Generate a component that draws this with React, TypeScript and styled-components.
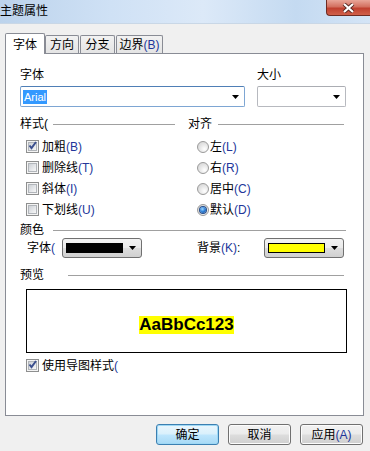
import styled, { createGlobalStyle } from "styled-components";

const GlobalStyle = createGlobalStyle`
  html, body { margin: 0; padding: 0; }
  body {
    background: #f0f0f0;
    font-family: "Liberation Sans", "Noto Sans CJK SC", sans-serif;
    font-size: 12px;
    color: #000;
  }
`;

const Window = styled.div`
  width: 370px;
  height: 451px;
  display: flex;
  flex-direction: column;
  background: #f0f0f0;
  overflow: hidden;
`;

const TitleBar = styled.div`
  height: 24px;
  flex: none;
  box-sizing: border-box;
  display: flex;
  justify-content: space-between;
  align-items: flex-start;
  background: linear-gradient(90deg, #bcd3ec 0%, #cfe1f5 30%, #dce9f8 55%, #c4daf1 80%, #d4e4f6 100%);
  border-bottom: 1px solid #c9d7e6;
`;

const Title = styled.div`
  line-height: 14px;
  margin-top: 4px;
`;

const CloseButton = styled.div`
  width: 44px;
  height: 16px;
  box-sizing: border-box;
  border: 1px solid #6e2b22;
  border-top: none;
  border-right: none;
  border-radius: 0 0 0 4px;
  background: linear-gradient(#e9a699 0%, #d3705f 45%, #c0402f 55%, #d0604a 100%);
  display: flex;
  align-items: center;
  justify-content: center;
`;

const Body = styled.div`
  flex: 1;
  display: flex;
  flex-direction: column;
  padding: 9px 6px 0 5px;
`;

const TabRow = styled.div`
  height: 21px;
  display: flex;
  align-items: flex-end;
  position: relative;
  z-index: 1;
`;

const Tab = styled.div<{ $active?: boolean; $width: number; $gap?: number }>`
  width: ${(p) => p.$width}px;
  height: ${(p) => (p.$active ? 21 : 18)}px;
  margin-bottom: ${(p) => (p.$active ? 0 : 1)}px;
  margin-left: ${(p) => p.$gap ?? 0}px;
  box-sizing: border-box;
  border: 1px solid #898c95;
  border-bottom: none;
  border-radius: 2px 2px 0 0;
  background: ${(p) => (p.$active ? "#fff" : "linear-gradient(#f2f2f2, #e4e4e4)")};
  display: flex;
  align-items: center;
  justify-content: center;
  line-height: 14px;
  padding-top: ${(p) => (p.$active ? 1 : 0)}px;
`;

const Panel = styled.div`
  margin-top: -1px;
  width: 359px;
  height: 363px;
  box-sizing: border-box;
  border: 1px solid #898c95;
  background: #fff;
  padding: 14px 0 0 14px;
  display: flex;
  flex-direction: column;
`;

const Mn = styled.span`
  color: #22369a;
`;

const FieldRow = styled.div`
  display: flex;
  gap: 12px;
`;

const Field = styled.div<{ $width: number }>`
  width: ${(p) => p.$width}px;
  display: flex;
  flex-direction: column;
  gap: 4px;
`;

const Label = styled.div`
  line-height: 14px;
  height: 14px;
`;

const Combo = styled.div<{ $focused?: boolean }>`
  height: 21px;
  box-sizing: border-box;
  border: 1px solid ${(p) => (p.$focused ? "#7ea6d3" : "#b7b9bf")};
  border-top-color: ${(p) => (p.$focused ? "#4f7fb6" : "#abadb3")};
  border-radius: 2px;
  background: #fff;
  display: flex;
  align-items: center;
  padding: 0 5px 0 2px;
`;

const Selected = styled.span`
  background: #3399ff;
  color: #fff;
  font-size: 11px;
  line-height: 14px;
  padding: 0 1px;
`;

const Arrow = styled.svg`
  margin-left: auto;
  flex: none;
`;

const Columns = styled.div<{ $top: number }>`
  display: grid;
  grid-template-columns: 155px 157px;
  column-gap: 13px;
  margin-top: ${(p) => p.$top}px;
`;

const Group = styled.div`
  display: flex;
  flex-direction: column;
`;

const Header = styled.div<{ $labelWidth: number; $top?: number; $end?: number }>`
  display: flex;
  align-items: center;
  height: 14px;
  line-height: 14px;
  margin-top: ${(p) => p.$top ?? 0}px;
  margin-right: ${(p) => p.$end ?? 0}px;

  span {
    width: ${(p) => p.$labelWidth}px;
    flex: none;
  }

  &::after {
    content: "";
    flex: 1;
    height: 1px;
    background: #a0a0a0;
  }
`;

const Options = styled.div`
  margin-top: 5px;
  display: flex;
  flex-direction: column;
`;

const Option = styled.div<{ $indent: number; $gap: number; $top?: number }>`
  height: 21px;
  display: flex;
  align-items: center;
  padding-left: ${(p) => p.$indent}px;
  margin-top: ${(p) => p.$top ?? 0}px;
  gap: ${(p) => p.$gap}px;
  line-height: 14px;
`;

const OptionText = styled.span`
  white-space: nowrap;
`;

const CheckBox = styled.span`
  width: 13px;
  height: 13px;
  flex: none;
  box-sizing: border-box;
  border: 1px solid #8e8f8f;
  background: #f4f4f4;
  padding: 1px;
  display: flex;

  & > i {
    flex: 1;
    border: 1px solid #b1b5ba;
    background: linear-gradient(135deg, #cdd1d6 0%, #e4e6e9 55%, #f7f7f7 100%);
    position: relative;
  }

  svg {
    position: absolute;
    left: -2px;
    top: -3px;
  }
`;

const Radio = styled.span<{ $on?: boolean }>`
  width: 12px;
  height: 12px;
  flex: none;
  box-sizing: border-box;
  border-radius: 50%;
  border: 1px solid #9a9a9a;
  background: radial-gradient(circle at 65% 70%, #ffffff 0%, #e8e8e8 45%, #cfcfcf 100%);
  display: flex;
  align-items: center;
  justify-content: center;

  &::after {
    content: "";
    display: ${(p) => (p.$on ? "block" : "none")};
    width: 6px;
    height: 6px;
    border-radius: 50%;
    background: radial-gradient(circle at 40% 35%, #9fd6ff 0%, #2c7fd6 50%, #153e86 100%);
    box-shadow: 0 0 0 1px #264d8a;
  }
`;

const ColorRow = styled.div`
  display: grid;
  grid-template-columns: 155px 157px;
  column-gap: 13px;
  margin-top: 1px;
  height: 20px;
`;

const ColorCell = styled.div<{ $indent: number }>`
  display: flex;
  align-items: center;
  padding-left: ${(p) => p.$indent}px;
  line-height: 14px;
`;

const ColorCombo = styled.div<{ $start?: number }>`
  width: 80px;
  height: 20px;
  box-sizing: border-box;
  margin-left: ${(p) => (p.$start !== undefined ? `${p.$start}px` : "auto")};
  margin-right: 1px;
  border: 1px solid #707070;
  border-radius: 3px;
  background: linear-gradient(#f3f3f3 0%, #ebebeb 48%, #dddddd 52%, #d0d0d0 100%);
  display: flex;
  align-items: center;
  padding: 0 5px 0 3px;
`;

const Swatch = styled.span<{ $color: string }>`
  width: 57px;
  height: 10px;
  box-sizing: border-box;
  border: 1px solid #000;
  background: ${(p) => p.$color};
`;

const Preview = styled.div`
  margin: 7px 0 0 6px;
  width: 321px;
  height: 64px;
  box-sizing: border-box;
  border: 1px solid #000;
  display: flex;
  align-items: center;
  justify-content: center;
  padding-top: 7px;
`;

const Sample = styled.span`
  background: #ffff00;
  font-family: "Liberation Sans", Arial, sans-serif;
  font-weight: bold;
  font-size: 17px;
  line-height: 18px;
`;

const Buttons = styled.div`
  display: flex;
  justify-content: flex-end;
  gap: 9px;
  margin-top: 8px;
  padding-right: 1px;
`;

const DlgButton = styled.button<{ $default?: boolean }>`
  width: 63px;
  height: 21px;
  box-sizing: border-box;
  padding: 0;
  font: inherit;
  line-height: 14px;
  color: #000;
  border-radius: 3px;
  border: 1px solid ${(p) => (p.$default ? "#3c7fb1" : "#707070")};
  background: ${(p) =>
    p.$default
      ? "linear-gradient(#eaf6fd 0%, #d9f0fc 48%, #bee6fd 52%, #a7d9f5 100%)"
      : "linear-gradient(#f2f2f2 0%, #ebebeb 48%, #dddddd 52%, #cfcfcf 100%)"};
  box-shadow: inset 0 0 0 1px ${(p) => (p.$default ? "#9ed8f5" : "#fcfcfc")};
`;

function DownArrow() {
  return (
    <Arrow width="7" height="4" viewBox="0 0 7 4">
      <polygon points="0,0 7,0 3.5,4" fill="#000" />
    </Arrow>
  );
}

function Check({ checked }: { checked?: boolean }) {
  return (
    <CheckBox>
      <i>
        {checked && (
          <svg width="11" height="11" viewBox="0 0 11 11">
            <path d="M2.5 5.5 L4.5 8 L9 2" fill="none" stroke="#3b4f8e" strokeWidth="2" />
          </svg>
        )}
      </i>
    </CheckBox>
  );
}

const styles = [
  { text: "加粗", key: "B", checked: true },
  { text: "删除线", key: "T" },
  { text: "斜体", key: "I" },
  { text: "下划线", key: "U" },
];

const aligns = [
  { text: "左", key: "L" },
  { text: "右", key: "R" },
  { text: "居中", key: "C" },
  { text: "默认", key: "D", on: true },
];

export default function App() {
  return (
    <>
      <GlobalStyle />
      <Window>
        <TitleBar>
          <Title>主题属性</Title>
          <CloseButton>
            <svg width="13" height="10" viewBox="0 0 13 10">
              <path d="M2 1 L11 9 M11 1 L2 9" stroke="#5a2a24" strokeWidth="4" />
              <path d="M2 1 L11 9 M11 1 L2 9" stroke="#fff" strokeWidth="2.2" />
            </svg>
          </CloseButton>
        </TitleBar>
        <Body>
          <TabRow>
            <Tab $active $width={40}>字体</Tab>
            <Tab $width={34}>方向</Tab>
            <Tab $width={35} $gap={1}>分支</Tab>
            <Tab $width={47} $gap={1}>
              边界<Mn>(B)</Mn>
            </Tab>
          </TabRow>
          <Panel>
            <FieldRow>
              <Field $width={225}>
                <Label>字体</Label>
                <Combo $focused>
                  <Selected>Arial</Selected>
                  <DownArrow />
                </Combo>
              </Field>
              <Field $width={89}>
                <Label>大小</Label>
                <Combo>
                  <DownArrow />
                </Combo>
              </Field>
            </FieldRow>

            <Columns $top={10}>
              <Group>
                <Header $labelWidth={33}>
                  <span>样式(</span>
                </Header>
                <Options>
                  {styles.map((s) => (
                    <Option key={s.key} $indent={6} $gap={3}>
                      <Check checked={s.checked} />
                      <OptionText>
                        {s.text}
                        <Mn>({s.key})</Mn>
                      </OptionText>
                    </Option>
                  ))}
                </Options>
              </Group>
              <Group>
                <Header $labelWidth={30} $end={1}>
                  <span>对齐</span>
                </Header>
                <Options>
                  {aligns.map((a) => (
                    <Option key={a.key} $indent={9} $gap={1}>
                      <Radio $on={a.on} />
                      <OptionText>
                        {a.text}
                        <Mn>({a.key})</Mn>
                      </OptionText>
                    </Option>
                  ))}
                </Options>
              </Group>
            </Columns>

            <Header $labelWidth={33} $top={3} $end={17}>
              <span>颜色</span>
            </Header>
            <ColorRow>
              <ColorCell $indent={7}>
                字体<Mn>(</Mn>
                <ColorCombo $start={7}>
                  <Swatch $color="#000" />
                  <DownArrow />
                </ColorCombo>
              </ColorCell>
              <ColorCell $indent={9}>
                背景<Mn>(K)</Mn>:
                <ColorCombo>
                  <Swatch $color="#ffff00" />
                  <DownArrow />
                </ColorCombo>
              </ColorCell>
            </ColorRow>

            <Header $labelWidth={48} $top={10} $end={19}>
              <span>预览</span>
            </Header>
            <Preview>
              <Sample>AaBbCc123</Sample>
            </Preview>
            <Option $indent={6} $gap={3} $top={2}>
              <Check checked />
              <OptionText>
                使用导图样式<Mn>(</Mn>
              </OptionText>
            </Option>
          </Panel>
          <Buttons>
            <DlgButton $default>确定</DlgButton>
            <DlgButton>取消</DlgButton>
            <DlgButton>
              应用<Mn>(A)</Mn>
            </DlgButton>
          </Buttons>
        </Body>
      </Window>
    </>
  );
}
